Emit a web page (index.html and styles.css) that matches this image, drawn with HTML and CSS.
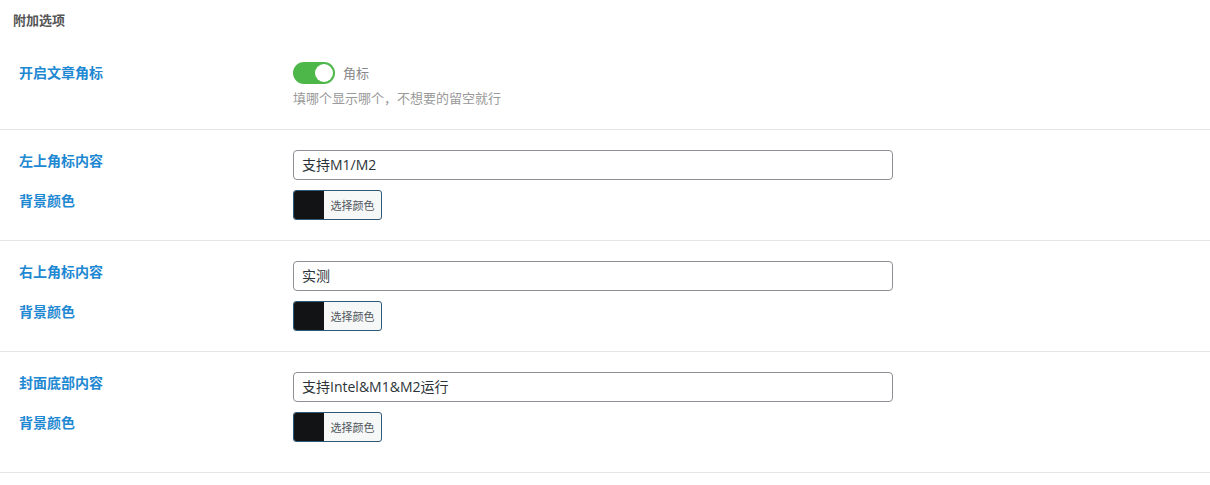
FILE: index.html
```html
<!DOCTYPE html>
<html lang="zh-CN">
<head>
<meta charset="utf-8">
<title>附加选项</title>
<link rel="stylesheet" href="styles.css">
</head>
<body>
<div class="panel">
  <div class="title">附加选项</div>

  <div class="row">
    <div class="field">
      <div class="label">开启文章角标</div>
      <div class="control">
        <div class="switch-line">
          <span class="switch"><span class="knob"></span></span>
          <span class="switch-text">角标</span>
        </div>
        <div class="desc">填哪个显示哪个，不想要的留空就行</div>
      </div>
    </div>
  </div>

  <div class="row">
    <div class="field">
      <div class="label">左上角标内容</div>
      <div class="control"><div class="input">支持M1/M2</div></div>
    </div>
    <div class="field">
      <div class="label">背景颜色</div>
      <div class="control">
        <div class="color-btn"><span class="swatch"></span><span class="color-text">选择颜色</span></div>
      </div>
    </div>
  </div>

  <div class="row">
    <div class="field">
      <div class="label">右上角标内容</div>
      <div class="control"><div class="input">实测</div></div>
    </div>
    <div class="field">
      <div class="label">背景颜色</div>
      <div class="control">
        <div class="color-btn"><span class="swatch"></span><span class="color-text">选择颜色</span></div>
      </div>
    </div>
  </div>

  <div class="row last">
    <div class="field">
      <div class="label">封面底部内容</div>
      <div class="control"><div class="input">支持Intel&amp;M1&amp;M2运行</div></div>
    </div>
    <div class="field">
      <div class="label">背景颜色</div>
      <div class="control">
        <div class="color-btn"><span class="swatch"></span><span class="color-text">选择颜色</span></div>
      </div>
    </div>
  </div>
</div>
</body>
</html>
```

FILE: styles.css
```css
html, body {
  margin: 0;
  padding: 0;
  background: #fff;
}
body {
  font-family: "Noto Sans CJK SC", "Noto Sans", sans-serif;
  color: #2c3338;
}
.panel {
  width: 1210px;
}
.title {
  padding: 11px 13px 13px;
  font-size: 13px;
  line-height: 18px;
  font-weight: bold;
  color: #555;
}
.row {
  display: flex;
  flex-direction: column;
  gap: 10px;
  padding: 20px 0 22px 19px;
  border-bottom: 1px solid #e6e6e6;
}
.row + .row {
  padding-bottom: 20px;
}
.row.last {
  padding-bottom: 30px;
}
.field {
  display: flex;
  align-items: flex-start;
}
.label {
  width: 274px;
  flex: none;
  font-size: 14px;
  line-height: 20px;
  font-weight: bold;
  color: #1e88d2;
}
.control {
  display: flex;
  flex-direction: column;
}
.switch-line {
  display: flex;
  align-items: center;
  gap: 8px;
  height: 22px;
}
.switch {
  position: relative;
  width: 42px;
  height: 22px;
  border-radius: 11px;
  background: #4db849;
  flex: none;
}
.knob {
  position: absolute;
  top: 2px;
  right: 2px;
  width: 18px;
  height: 18px;
  border-radius: 50%;
  background: #fff;
}
.switch-text {
  font-size: 13px;
  line-height: 18px;
  color: #888;
}
.desc {
  margin-top: 5px;
  font-size: 13px;
  line-height: 18px;
  color: #999;
}
.input {
  box-sizing: border-box;
  width: 600px;
  height: 30px;
  border: 1px solid #8c8f94;
  border-radius: 4px;
  padding: 0 8px;
  font-family: "Open Sans", "Noto Sans CJK SC", sans-serif;
  font-size: 14px;
  line-height: 28px;
  color: #2c3338;
}
.color-btn {
  box-sizing: border-box;
  display: flex;
  width: 89px;
  height: 30px;
  border: 1px solid #2e5a7a;
  border-radius: 3px;
  overflow: hidden;
  background: #f6f7f7;
}
.swatch {
  width: 30px;
  flex: none;
  background: #111315;
}
.color-text {
  flex: 1;
  text-align: center;
  font-size: 11px;
  line-height: 28px;
  color: #50575e;
}
```
